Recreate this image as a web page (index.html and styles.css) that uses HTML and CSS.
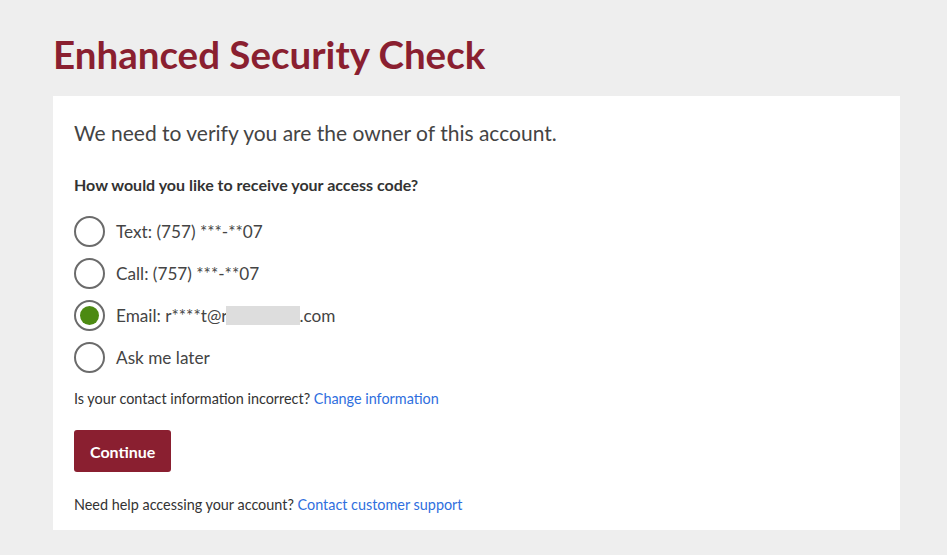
FILE: index.html
```html
<!DOCTYPE html>
<html lang="en">
<head>
  <meta charset="UTF-8" />
  <meta name="viewport" content="width=device-width, initial-scale=1.0" />
  <title>Enhanced Security Check</title>
  <link rel="stylesheet" href="styles.css">
</head>
<body>
  <div class="page">
    <h1 class="title">Enhanced Security Check</h1>
    <div class="card">
      <p class="lead">We need to verify you are the owner of this account.</p>
      <p class="question">How would you like to receive your access code?</p>
      <ul class="options">
        <li class="option"><span class="radio"></span>Text: (757) ***-**07</li>
        <li class="option"><span class="radio"></span>Call: (757) ***-**07</li>
        <li class="option"><span class="radio checked"></span>Email: r****t@r<span class="redact"></span>.com</li>
        <li class="option"><span class="radio"></span>Ask me later</li>
      </ul>
      <p class="note">Is your contact information incorrect? <a href="#">Change information</a></p>
      <button class="btn">Continue</button>
      <p class="note help">Need help accessing your account? <a href="#">Contact customer support</a></p>
    </div>
  </div>
</body>
</html>
```

FILE: styles.css
```css
* { box-sizing: border-box; }
body {
  margin: 0;
  background: #eeeeee;
  font-family: Lato, 'Open Sans', sans-serif;
  color: #333;
}
.page { padding: 31px 47px 0 53px; }
.title {
  margin: 0 0 19px;
  font-size: 38.5px; line-height: 46px;
  font-weight: 700; color: #8a1f30;
}
.card {
  background: #fff;
  padding: 24px 21px 16px;
  height: 434px;
}
.lead { margin: 0 0 29px; font-size: 21px; line-height: 26px; color: #444; }
.question { margin: 0 0 16px; font-size: 16px; line-height: 19px; font-weight: 700; color: #333; }
.options { list-style: none; margin: 0; padding: 0; }
.option {
  display: flex; align-items: center;
  height: 42px; font-size: 17.2px; color: #444;
}
.radio {
  width: 31px; height: 31px; border-radius: 50%;
  border: 2px solid #6b6b6b; margin-right: 11px;
  display: flex; align-items: center; justify-content: center;
  flex: none;
}
.radio.checked::after {
  content: ''; width: 19px; height: 19px; border-radius: 50%;
  background: #4c8a12;
}
.redact {
  display: inline-block; width: 74px; height: 19px;
  background: #dddddd; margin-left: -2px;
}
.note { margin: 12px 0 22px; font-size: 14.4px; line-height: 18px; color: #333; }
.note a { color: #2f6fde; text-decoration: none; }
.btn {
  display: block; padding: 0 16px; height: 42px;
  background: #8a1f30; color: #fff; border: none; border-radius: 3px;
  font-family: inherit; font-size: 16px; font-weight: 700;
}
.help { margin: 24px 0 0; }
```
